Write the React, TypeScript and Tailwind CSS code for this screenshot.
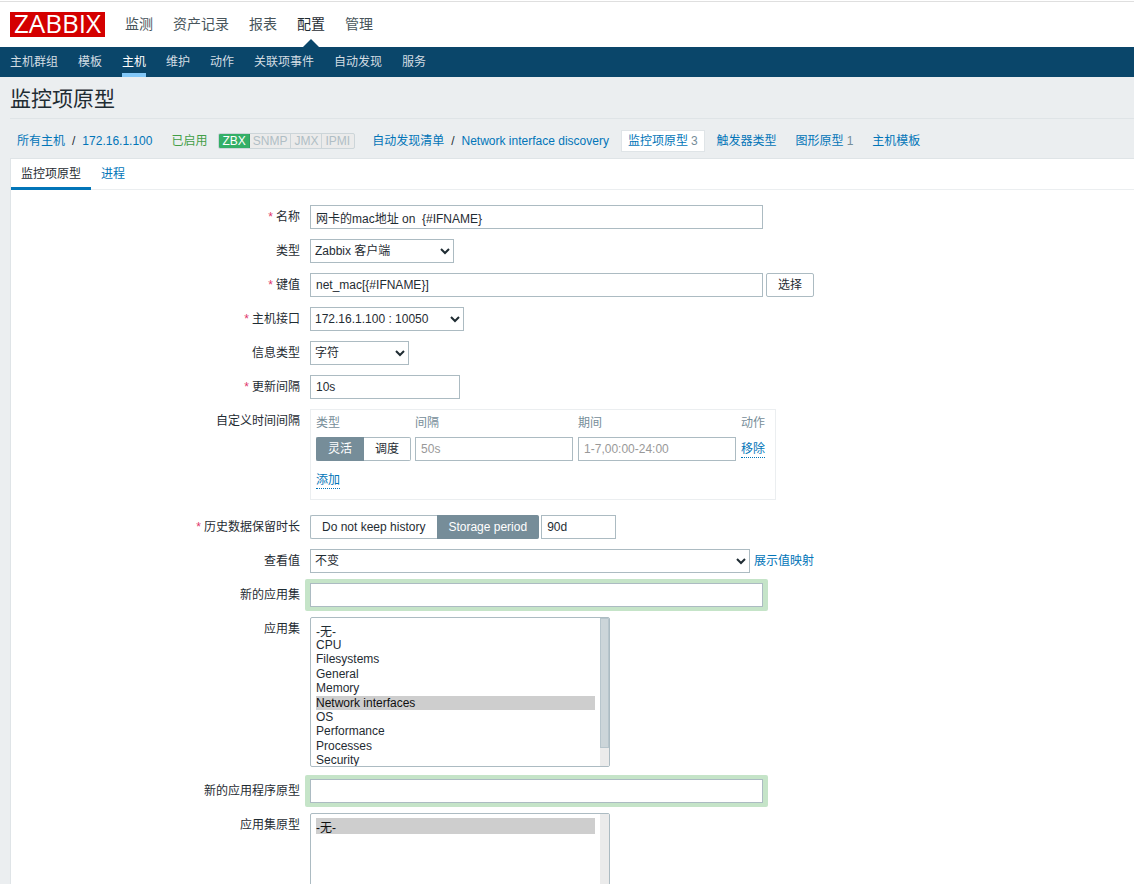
import type { ReactNode } from 'react';

const mainMenu = ['监测', '资产记录', '报表', '配置', '管理'];
const subMenu = ['主机群组', '模板', '主机', '维护', '动作', '关联项事件', '自动发现', '服务'];
const applications = [
  '-无-',
  'CPU',
  'Filesystems',
  'General',
  'Memory',
  'Network interfaces',
  'OS',
  'Performance',
  'Processes',
  'Security',
  'Zabbix agent',
];

const control = 'h-6 border border-[#acbbc2] bg-white text-xs text-[#1f2c33] outline-none';
const input = `${control} px-[5px] placeholder:text-[#999999]`;
const select = `${control} pr-px`;
const link = 'text-[#0275b8]';

type FieldProps = {
  label: string;
  id?: string;
  required?: boolean;
  children: ReactNode;
};

function Field({ label, id, required, children }: FieldProps) {
  return (
    <div className="flex items-start gap-[10px]">
      <label htmlFor={id} className="w-[289px] shrink-0 text-right leading-6">
        {required && <span className="mr-[3px] text-[#e0366b]">*</span>}
        {label}
      </label>
      <div className="flex items-center">{children}</div>
    </div>
  );
}

type SegmentProps = {
  name: string;
  options: string[];
  checked: string;
};

function Segment({ name, options, checked }: SegmentProps) {
  return (
    <div className="relative flex">
      {options.map((option) => (
        <label
          key={option}
          className="flex h-6 items-center border border-[#acbbc2] px-[11px] whitespace-nowrap first:rounded-l-[2px] first:border-r-0 first:pr-3 last:rounded-r-[2px] last:border-l-0 has-checked:border-[#768d99] has-checked:bg-[#768d99] has-checked:text-white"
        >
          <input type="radio" name={name} defaultChecked={option === checked} className="sr-only" />
          {option}
        </label>
      ))}
    </div>
  );
}

function HighlightedInput({ id }: { id: string }) {
  return (
    <div className="-mx-[5px] -my-1 rounded-[2px] bg-[#c5e4c8] px-[5px] py-1">
      <input id={id} type="text" className={`${input} block w-[453px]`} />
    </div>
  );
}

type ListboxProps = {
  id: string;
  options: string[];
  selected: string;
};

function Listbox({ id, options, selected }: ListboxProps) {
  return (
    <div className="flex h-[150px] w-[300px] overflow-hidden rounded-[2px] border border-[#acbbc2] bg-white">
      <select
        id={id}
        multiple
        defaultValue={[selected]}
        className="h-full min-w-0 flex-1 px-[5px] py-1 text-xs text-[#1f2c33] outline-none [scrollbar-width:none] [&>option]:p-0 [&>option:first-child]:h-4 [&>option:first-child]:leading-4"
      >
        {options.map((name) => (
          <option key={name}>{name}</option>
        ))}
      </select>
      <div className="w-[9px] bg-[#ebebeb]">
        {options.length > 10 && <div className="h-[130px] border border-[#b7c5cc] bg-[#ccd5d9]" />}
      </div>
    </div>
  );
}

function Header() {
  return (
    <header className="bg-white pt-px">
      <div className="flex h-[46px] items-center border-t border-[#dfdfdf] px-[10px]">
        <a
          href="#"
          className="mr-5 flex h-[25px] w-[95px] items-center justify-center bg-[#d40000] pb-[3px] font-['Open_Sans',sans-serif] text-[26px] leading-none text-white"
        >
          ZABBIX
        </a>
        <nav className="flex h-full gap-5 text-sm">
          {mainMenu.map((item) => (
            <a
              key={item}
              href="#"
              className={
                item === '配置'
                  ? 'relative flex items-center pb-[2px] text-[#1f2c33] after:absolute after:bottom-0 after:left-1/2 after:-translate-x-1/2 after:border-x-8 after:border-b-8 after:border-x-transparent after:border-b-[#0a466a]'
                  : 'flex items-center pb-[2px] text-[#48555b]'
              }
            >
              {item}
            </a>
          ))}
        </nav>
      </div>
      <nav className="flex h-[30px] gap-5 bg-[#0a466a] px-[10px]">
        {subMenu.map((item) => (
          <a
            key={item}
            href="#"
            className={
              item === '主机'
                ? 'flex items-center border-b-4 border-[#82c7f7] pt-1 text-white'
                : 'flex items-center text-[#d3dde3]'
            }
          >
            {item}
          </a>
        ))}
      </nav>
    </header>
  );
}

function Breadcrumbs() {
  return (
    <nav className="flex h-[39px] items-center pt-[5px] pl-[7px] whitespace-nowrap">
      <a href="#" className={link}>所有主机</a>
      <span className="mx-[7px]">/</span>
      <a href="#" className={link}>172.16.1.100</a>
      <span className="ml-[19px] text-[#429e47]">已启用</span>
      <div className="ml-[11px] flex h-4 items-center overflow-hidden rounded-[2px] border border-[#ccd5d9] bg-[#ebebeb] leading-[14px] text-[#b0bec5]">
        <span className="-my-px -ml-px border border-[#2f9f5e] bg-[#34af67] px-[3px] text-white">ZBX</span>
        <span className="border-r border-[#ccd5d9] px-[3px]">SNMP</span>
        <span className="border-r border-[#ccd5d9] px-[3px]">JMX</span>
        <span className="pr-1 pl-[3px]">IPMI</span>
      </div>
      <a href="#" className={`${link} ml-[17px]`}>自动发现清单</a>
      <span className="mx-[7px]">/</span>
      <a href="#" className={link}>Network interface discovery</a>
      <span className="ml-3 flex h-[22px] items-center gap-[3px] border border-[#dfe4e7] bg-white px-[6px] text-[#768d99]">
        <a href="#" className={link}>监控项原型</a>3
      </span>
      <a href="#" className={`${link} ml-3`}>触发器类型</a>
      <span className="ml-[19px] flex gap-[3px] text-[#768d99]">
        <a href="#" className={link}>图形原型</a>1
      </span>
      <a href="#" className={`${link} ml-[19px]`}>主机模板</a>
    </nav>
  );
}

function LinkButton({ children }: { children: ReactNode }) {
  return (
    <button type="button" className="block border-b border-dotted border-[#0275b8] leading-4 text-[#0275b8]">
      {children}
    </button>
  );
}

function CustomIntervals() {
  return (
    <div className="h-[91px] border border-[#ebeef0] px-[5px] pt-1">
      <table className="text-left">
        <thead className="text-[#768d99]">
          <tr className="h-[23px] align-top leading-[18px]">
            <th className="font-normal">类型</th>
            <th className="font-normal">间隔</th>
            <th className="font-normal">期间</th>
            <th className="font-normal">动作</th>
          </tr>
        </thead>
        <tbody>
          <tr>
            <td className="pr-1">
              <Segment name="interval-type" options={['灵活', '调度']} checked="灵活" />
            </td>
            <td className="pr-[5px]">
              <input type="text" aria-label="间隔" placeholder="50s" className={`${input} block w-[158px]`} />
            </td>
            <td className="pr-[5px]">
              <input type="text" aria-label="期间" placeholder="1-7,00:00-24:00" className={`${input} block w-[158px]`} />
            </td>
            <td className="pr-[5px]">
              <LinkButton>移除</LinkButton>
            </td>
          </tr>
          <tr>
            <td colSpan={4} className="h-[38px]">
              <LinkButton>添加</LinkButton>
            </td>
          </tr>
        </tbody>
      </table>
    </div>
  );
}

export default function App() {
  return (
    <div className="h-screen overflow-y-auto bg-[#ebeef0] font-['Liberation_Sans','Noto_Sans_CJK_SC',sans-serif] text-xs text-[#1f2c33]">
      <Header />
      <main className="pl-[10px]">
        <h1 className="flex h-[42px] items-center border-b border-[#dfe4e7] pt-[2px] text-[21px]">监控项原型</h1>
        <Breadcrumbs />
        <form className="border-t border-l border-[#dfe4e7] bg-white pb-[10px]">
          <div className="flex h-[31px] border-b border-[#ebeef0]">
            <a href="#" className="-mb-px flex items-center border-b-3 border-[#0275b8] px-[10px] pt-[2px]">
              监控项原型
            </a>
            <a href="#" className={`${link} flex items-center px-[10px]`}>进程</a>
          </div>

          <div className="flex flex-col gap-[10px] pt-[15px]">
            <Field label="名称" id="name" required>
              <input id="name" type="text" defaultValue="网卡的mac地址 on  {#IFNAME}" className={`${input} w-[453px]`} />
            </Field>
            <Field label="类型" id="type">
              <select id="type" className={`${select} w-36`}>
                <option>Zabbix 客户端</option>
              </select>
            </Field>
            <Field label="键值" id="key" required>
              <input id="key" type="text" defaultValue="net_mac[{#IFNAME}]" className={`${input} w-[453px]`} />
              <button type="button" className={`${control} ml-[3px] rounded-[2px] px-[11px]`}>选择</button>
            </Field>
            <Field label="主机接口" id="interface" required>
              <select id="interface" className={`${select} w-[154px]`}>
                <option>172.16.1.100 : 10050</option>
              </select>
            </Field>
            <Field label="信息类型" id="value-type">
              <select id="value-type" className={`${select} w-[99px]`}>
                <option>字符</option>
              </select>
            </Field>
            <Field label="更新间隔" id="delay" required>
              <input id="delay" type="text" defaultValue="10s" className={`${input} w-[150px]`} />
            </Field>
            <Field label="自定义时间间隔">
              <CustomIntervals />
            </Field>
            <div className="pt-[5px]">
              <Field label="历史数据保留时长" id="history" required>
                <Segment
                  name="history-mode"
                  options={['Do not keep history', 'Storage period']}
                  checked="Storage period"
                />
                <input id="history" type="text" defaultValue="90d" className={`${input} ml-[2px] w-[75px]`} />
              </Field>
            </div>
            <Field label="查看值" id="value-map">
              <select id="value-map" className={`${select} w-[440px]`}>
                <option>不变</option>
              </select>
              <a href="#" className={`${link} ml-1`}>展示值映射</a>
            </Field>
            <Field label="新的应用集" id="new-application">
              <HighlightedInput id="new-application" />
            </Field>
            <Field label="应用集" id="applications">
              <Listbox id="applications" options={applications} selected="Network interfaces" />
            </Field>
            <div className="pt-[2px]">
              <Field label="新的应用程序原型" id="new-prototype">
                <HighlightedInput id="new-prototype" />
              </Field>
            </div>
            <Field label="应用集原型" id="prototypes">
              <Listbox id="prototypes" options={['-无-']} selected="-无-" />
            </Field>
          </div>
        </form>
      </main>
    </div>
  );
}
